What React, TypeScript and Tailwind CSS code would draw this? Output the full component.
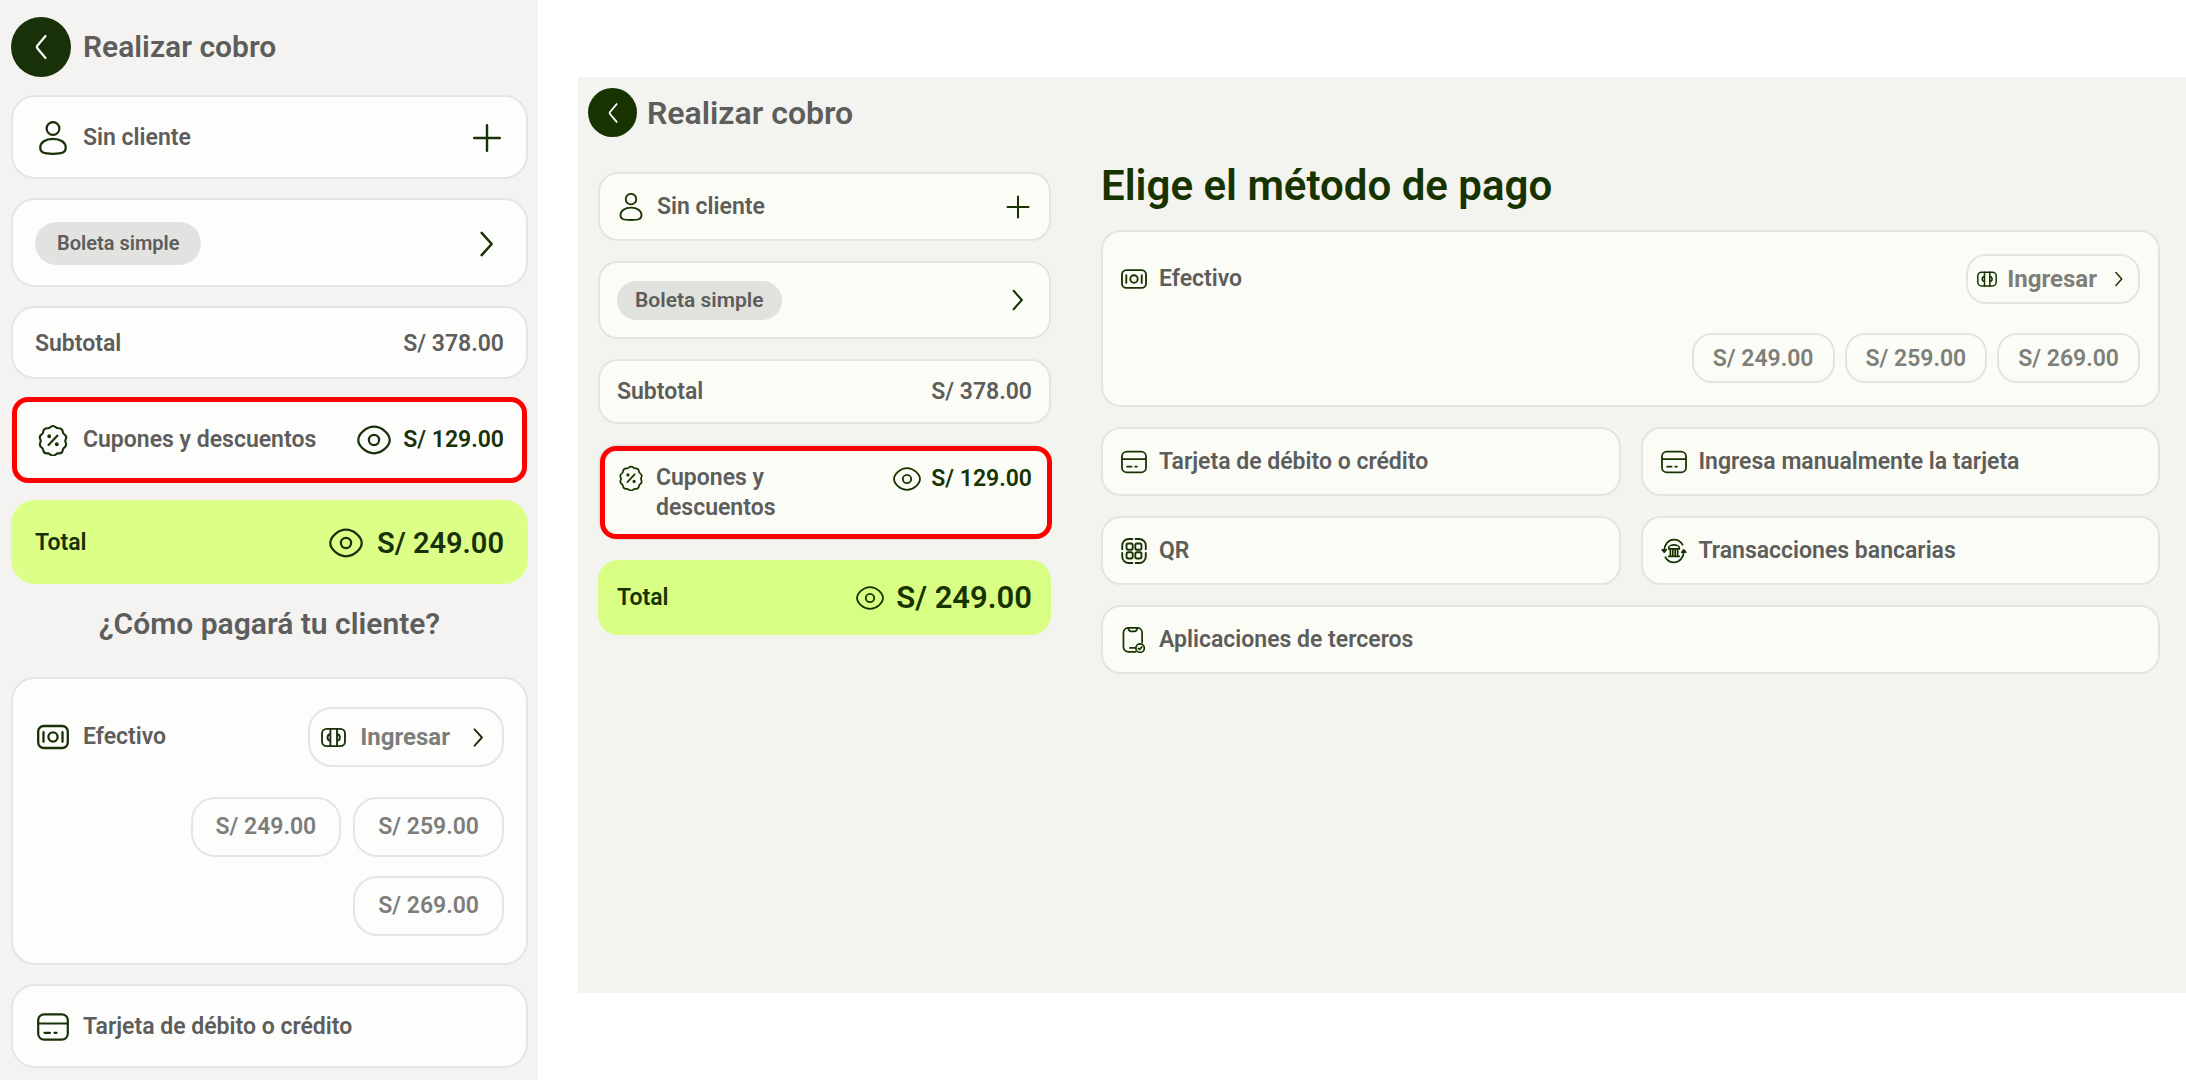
import React from 'react';
import clsx from 'clsx';

type IconProps = { className?: string };

function Icon({ className, children, width = 2 }: IconProps & { children: React.ReactNode; width?: number }) {
  return (
    <svg
      viewBox="0 0 32 32"
      fill="none"
      stroke="currentColor"
      strokeWidth={width}
      strokeLinecap="round"
      strokeLinejoin="round"
      className={clsx('shrink-0', className)}
      aria-hidden="true"
    >
      {children}
    </svg>
  );
}

function ChevronLeft({ className }: IconProps) {
  return (
    <Icon className={className} width={2.2}>
      <path d="M20.5 5 12.3 14.8a1.9 1.9 0 0 0 0 2.4L20.5 27" />
    </Icon>
  );
}

function ChevronRight({ className }: IconProps) {
  return (
    <Icon className={className} width={2.4}>
      <path d="m11 5.5 9.4 10.5L11 26.5" />
    </Icon>
  );
}

function Plus({ className }: IconProps) {
  return (
    <Icon className={className} width={2.3}>
      <path d="M16 4v24M4 16h24" />
    </Icon>
  );
}

function Person({ className }: IconProps) {
  return (
    <Icon className={className} width={2.1}>
      <circle cx="16" cy="7" r="6" />
      <path d="M16 16.8c7 0 12 3.2 12 8.2 0 4.8-3 5.9-12 5.9S4 29.8 4 25c0-5 5-8.2 12-8.2Z" />
    </Icon>
  );
}

function Eye({ className }: IconProps) {
  return (
    <Icon className={className} width={2.1}>
      <path d="M16 3.5c7.3 0 14.8 6.8 14.8 12.500S23.300 28.500 16 28.500 1.200 21.700 1.200 16 8.700 3.500 16 3.500Z" />
      <circle cx="16" cy="16" r="4.8" />
    </Icon>
  );
}

function Discount({ className }: IconProps) {
  return (
    <Icon className={className} width={2.1}>
      <path d="M13.200 3.200c1.700-1.700 3.900-1.700 5.600 0 .8.8 1.700 1.100 2.800 1 2.400-.1 3.900 1.300 4.200 3.600.1 1.100.6 1.900 1.500 2.500 2 1.300 2.400 3.300 1.300 5.300-.5 1-.5 1.800 0 2.800 1 2.100.5 4-1.400 5.200-.9.600-1.300 1.400-1.400 2.500-.3 2.300-1.800 3.500-4.200 3.300-1.100-.1-2 .2-2.800 1-1.700 1.600-3.900 1.600-5.600 0-.8-.8-1.700-1.100-2.800-1-2.400.2-3.900-1-4.200-3.300-.1-1.100-.5-1.900-1.400-2.500-1.900-1.200-2.400-3.100-1.400-5.200.5-1 .5-1.800 0-2.800-1.100-2-.7-4 1.300-5.300.9-.6 1.400-1.400 1.500-2.500.3-2.300 1.800-3.700 4.200-3.600 1.100.1 2-.2 2.800-1Z" />
      <path d="m11.5 21 9-9.5" />
      <circle cx="12.2" cy="12.2" r="0.9" fill="currentColor" />
      <circle cx="19.8" cy="20.2" r="0.9" fill="currentColor" />
    </Icon>
  );
}

function Cash({ className }: IconProps) {
  return (
    <Icon className={className} width={2.3}>
      <rect x="1.2" y="5" width="29.6" height="22" rx="5.5" />
      <circle cx="16" cy="16" r="4.6" />
      <path d="M6.5 11.2v9.6M25.5 11.2v9.6" />
    </Icon>
  );
}

function Banknote({ className }: IconProps) {
  return (
    <Icon className={className} width={2.4}>
      <rect x="1.3" y="5" width="29.4" height="22" rx="6" />
      <path d="M12 5v22M20.5 5v22M12 11.5a4.6 4.6 0 0 0 0 9M20.5 11.5a4.6 4.6 0 0 1 0 9" />
    </Icon>
  );
}

function Card({ className }: IconProps) {
  return (
    <Icon className={className} width={2.2}>
      <rect x="1.2" y="3.3" width="29.6" height="25.4" rx="6" />
      <path d="M1.5 12.5h29M7.5 21.800h5.5M17.5 21.800h2" />
    </Icon>
  );
}

function Qr({ className }: IconProps) {
  return (
    <Icon className={className} width={2.3}>
      <path d="M14 1.2H9.5a8 8 0 0 0-8 8v4.5M18 1.2h4.5a8 8 0 0 1 8 8v4.5M14 30.8H9.5a8 8 0 0 1-8-8v-4.5M18 30.8h4.5a8 8 0 0 0 8-8v-4.5" />
      <rect x="6.8" y="6.8" width="7.6" height="7.6" rx="2" />
      <rect x="17.6" y="6.8" width="7.6" height="7.6" rx="2" />
      <rect x="6.8" y="17.6" width="7.6" height="7.6" rx="2" />
      <rect x="17.6" y="17.6" width="7.6" height="7.6" rx="2" />
    </Icon>
  );
}

function Bank({ className }: IconProps) {
  return (
    <Icon className={className} width={2.1}>
      <path d="M4 15.500C4 8 9 2 16 2c4.600 0 8.600 2.600 10.600 6.300M28 16.500C28 24 23 30 16 30c-4.600 0-8.600-2.600-10.600-6.300" />
      <path d="M1.5 14.5h5L4 17.5ZM25.5 17.5h5L28 14.5Z" fill="currentColor" />
      <path d="M9.500 13.500V12c0-2.200 3.500-3.500 6.500-3.500s6.500 1.300 6.500 3.500v1.500ZM11.500 14v8M14.500 14v8M17.500 14v8M20.500 14v8M9.500 22.500h13" />
    </Icon>
  );
}

function PhoneCheck({ className }: IconProps) {
  return (
    <Icon className={className} width={2.1}>
      <path d="M18 30.5H9a6 6 0 0 1-6-6V7a6 6 0 0 1 6-6h11a6 6 0 0 1 6 6v12" />
      <path d="M9 1.500c.3 2.500 1.500 4 3.500 4h4c2 0 3.200-1.500 3.500-4M11 25.800h6" />
      <circle cx="23.5" cy="26" r="5.2" />
      <path d="m21.3 26.2 1.6 1.5 2.8-3.2" />
    </Icon>
  );
}

const quickAmounts = ['S/ 249.00', 'S/ 259.00', 'S/ 269.00'];

const mobileCard = 'w-full rounded-3xl border-2 border-[#e5e5e3] bg-[#fdfefc]';
const desktopCard = 'w-full rounded-[20px] border-2 border-[#e4e5e0] bg-[#fbfcf6]';

function MobileCheckout() {
  return (
    <section className="bg-[#f4f3f2] pt-[17px] pr-2.5 pb-3 pl-[11px]">
      <header className="flex items-center gap-3">
        <button aria-label="Volver" className="flex size-[60px] items-center justify-center rounded-full bg-[#193108] text-white">
          <ChevronLeft className="size-8" />
        </button>
        <h1 className="text-[30px] leading-9">Realizar cobro</h1>
      </header>

      <div className="mt-[18px] flex flex-col gap-[19px]">
        <button className={clsx(mobileCard, 'flex h-[84px] items-center px-[22px] pt-0.5')}>
          <Person className="ml-px size-[34px] text-[#193108]" />
          <span className="ml-[13px]">Sin cliente</span>
          <Plus className="ml-auto size-[34px] text-[#193108]" />
        </button>
        <button className={clsx(mobileCard, 'flex h-[89px] items-center px-[22px] pt-0.5')}>
          <span className="rounded-full bg-[#e2e2e1] px-[22px] py-2 text-xl leading-[27px]">Boleta simple</span>
          <ChevronRight className="ml-auto size-[34px] text-[#193108]" />
        </button>
        <div className={clsx(mobileCard, 'flex h-[73px] items-center justify-between px-[22px] pt-0.5')}>
          <span>Subtotal</span>
          <span>S/ 378.00</span>
        </div>
        <div className={clsx(mobileCard, 'relative flex h-[83px] items-center px-[22px] pt-px')}>
          <Discount className="ml-0.5 size-8 text-[#193108]" />
          <span className="ml-3.5">Cupones y descuentos</span>
          <button aria-label="Ver descuentos" className="mr-3 ml-auto text-[#193108]">
            <Eye className="size-[34px]" />
          </button>
          <span className="text-[#193108]">S/ 129.00</span>
          <span className="pointer-events-none absolute -inset-x-px -top-[3px] -bottom-1 rounded-2xl border-[5px] border-[#ff0000]" />
        </div>
        <div className="flex h-[84px] items-center rounded-3xl bg-[#dcff88] px-6 pt-0.5 text-[#193108]">
          <span>Total</span>
          <button aria-label="Ver total" className="mr-3.5 ml-auto">
            <Eye className="size-[34px]" />
          </button>
          <span className="text-[29px]">S/ 249.00</span>
        </div>
      </div>

      <h2 className="mt-[22px] text-center text-[30px] leading-9">¿Cómo pagará tu cliente?</h2>

      <div className="mt-[35px] flex flex-col gap-[19px]">
        <div className={clsx(mobileCard, 'px-[22px] pt-7 pb-[27px]')}>
          <div className="flex items-center">
            <Cash className="ml-0.5 size-8 text-[#193108]" />
            <span className="ml-3.5">Efectivo</span>
            <button className="ml-auto flex h-[60px] items-center rounded-3xl border-2 border-[#e5e5e3] px-[11px] text-2xl text-[#7d7d7b]">
              <Banknote className="size-[25px] text-[#193108]" />
              <span className="ml-3.5 font-bold">Ingresar</span>
              <ChevronRight className="ml-4 size-[25px] text-[#193108]" />
            </button>
          </div>
          <div className="mt-[30px] flex flex-wrap justify-end gap-x-3 gap-y-[19px] pl-20">
            {quickAmounts.map((amount) => (
              <button key={amount} className="h-[60px] rounded-3xl border-2 border-[#e5e5e3] px-[23px] text-[#7d7d7b]">
                {amount}
              </button>
            ))}
          </div>
        </div>
        <button className={clsx(mobileCard, 'flex h-[84px] items-center px-[22px] pt-0.5')}>
          <Card className="ml-0.5 size-8 text-[#193108]" />
          <span className="ml-3.5">Tarjeta de débito o crédito</span>
        </button>
      </div>
    </section>
  );
}

function Method({ icon, label, className }: { icon: React.ReactNode; label: string; className?: string }) {
  return (
    <button className={clsx(desktopCard, 'flex h-[69px] items-center gap-3 px-[18px] pt-px', className)}>
      <span className="text-[#173300]">{icon}</span>
      {label}
    </button>
  );
}

function DesktopCheckout() {
  return (
    <section className="flex-1 bg-[#f3f3ef] pt-[11px] pr-[26px] pb-8 pl-2.5">
      <header className="flex items-center gap-2.5">
        <button aria-label="Volver" className="flex size-[49px] items-center justify-center rounded-full bg-[#173300] text-white">
          <ChevronLeft className="size-[26px]" />
        </button>
        <h1 className="text-[32px] leading-9">Realizar cobro</h1>
      </header>

      <div className="mt-6 ml-2.5 grid grid-cols-[453fr_1059fr] gap-[50px]">
        <div className="mt-[11px] flex flex-col gap-5">
          <button className={clsx(desktopCard, 'flex h-[69px] items-center px-[17px] pt-px')}>
            <Person className="size-7 text-[#173300]" />
            <span className="ml-3">Sin cliente</span>
            <Plus className="ml-auto size-7 text-[#173300]" />
          </button>
          <button className={clsx(desktopCard, 'flex h-[78px] items-center px-[17px]')}>
            <span className="rounded-full bg-[#e1e2dd] px-[18px] py-1.5 text-[21px] leading-[27px]">Boleta simple</span>
            <ChevronRight className="ml-auto size-7 text-[#173300]" />
          </button>
          <div className={clsx(desktopCard, 'flex h-[65px] items-center justify-between px-[17px] pt-px')}>
            <span>Subtotal</span>
            <span>S/ 378.00</span>
          </div>
          <div className={clsx(desktopCard, 'relative flex items-start px-[17px] pt-[17px] pb-[15px]')}>
            <Discount className="mt-0.5 ml-px size-[26px] text-[#173300]" />
            <span className="ml-3 w-40 leading-[30px]">Cupones y descuentos</span>
            <span className="mt-0.5 ml-auto flex items-center gap-2.5 leading-7 text-[#173300]">
              <button aria-label="Ver descuentos">
                <Eye className="size-7" />
              </button>
              S/ 129.00
            </span>
            <span className="pointer-events-none absolute top-0 -right-[3px] -bottom-px left-0 rounded-2xl border-[5px] border-[#ff0000]" />
          </div>
          <div className="flex h-[75px] items-center rounded-[20px] bg-[#d8ff84] px-[19px] pt-px text-[#173300]">
            <span>Total</span>
            <button aria-label="Ver total" className="mr-3 ml-auto">
              <Eye className="size-7" />
            </button>
            <span className="text-[31px]">S/ 249.00</span>
          </div>
        </div>

        <div>
          <h2 className="text-[42px] leading-[50px] text-[#173300]">Elige el método de pago</h2>
          <div className={clsx(desktopCard, 'mt-[19px] px-[18px] py-[22px]')}>
            <div className="flex items-center">
              <Cash className="size-[26px] text-[#173300]" />
              <span className="ml-3">Efectivo</span>
              <button className="ml-auto flex h-[50px] items-center rounded-[20px] border-2 border-[#e4e5e0] px-[9px] text-2xl text-[#7e7f79]">
                <Banknote className="size-5 text-[#173300]" />
                <span className="ml-2.5 font-bold">Ingresar</span>
                <ChevronRight className="ml-3 size-5 text-[#173300]" />
              </button>
            </div>
            <div className="mt-[29px] flex justify-end gap-2.5">
              {quickAmounts.map((amount) => (
                <button key={amount} className="h-[50px] rounded-[20px] border-2 border-[#e4e5e0] px-[19px] pt-px text-[#7e7f79]">
                  {amount}
                </button>
              ))}
            </div>
          </div>
          <div className="mt-5 grid grid-cols-2 gap-5">
            <Method icon={<Card className="size-[26px]" />} label="Tarjeta de débito o crédito" />
            <Method icon={<Card className="size-[26px]" />} label="Ingresa manualmente la tarjeta" />
            <Method icon={<Qr className="size-[26px]" />} label="QR" />
            <Method icon={<Bank className="size-[26px]" />} label="Transacciones bancarias" />
            <Method icon={<PhoneCheck className="size-[26px]" />} label="Aplicaciones de terceros" className="col-span-2" />
          </div>
        </div>
      </div>
    </section>
  );
}

export default function App() {
  return (
    <div className="grid min-h-screen grid-cols-[538fr_1648fr] bg-white font-['Roboto','Liberation_Sans',sans-serif] text-[23px] leading-9 font-semibold text-[#5d5d5b]">
      <MobileCheckout />
      <main className="flex flex-col pt-[77px] pb-[87px] pl-10">
        <DesktopCheckout />
      </main>
    </div>
  );
}
